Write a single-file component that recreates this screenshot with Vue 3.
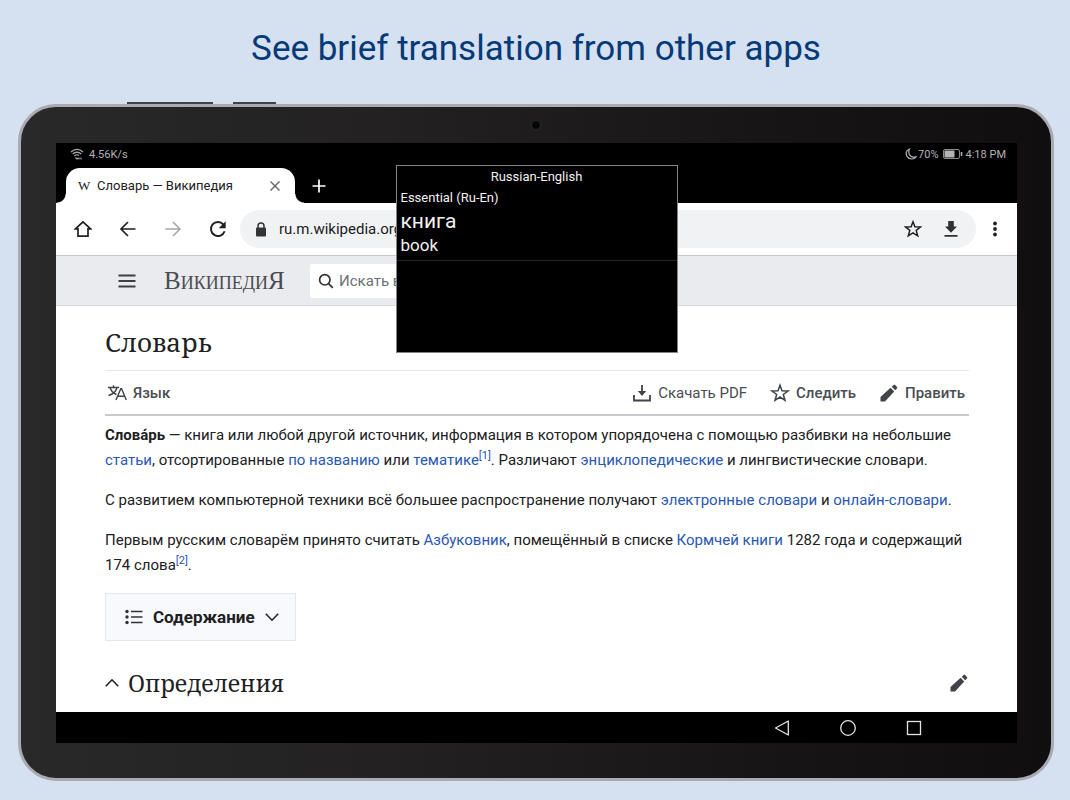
<script setup>
const articleUrl = 'ru.m.wikipedia.org'
</script>

<template>
  <main class="promo">
    <h1 class="headline">See brief translation from other apps</h1>

    <section class="tablet" aria-label="Tablet">
      <span class="side-key side-key-long"></span>
      <span class="side-key side-key-short"></span>
      <span class="camera"></span>

      <div class="screen">
        <div class="status">
          <svg class="wifi" viewBox="0 0 14 12" fill="none" stroke="currentColor" stroke-width="1.1">
            <path d="M1 4Q7-1.2 13 4M2.700 6Q7 2.300 11.300 6M4.400 8Q7 5.800 9 7.500" />
            <path d="M5.500 9.500L7 11L8 10M9 9.500V11.500M11 9.500V11.500" />
          </svg>
          <span class="speed">4.56K/s</span>
          <svg class="moon" viewBox="0 0 12 12" fill="none" stroke="currentColor" stroke-width="1.2">
            <path d="M4.500 1C1 2.200 .2 6 2.200 8.600C4.500 11.800 9 11.700 11 8.800C8 9.600 5.500 8.800 4.400 6.500C3.500 4.600 3.700 2.700 4.500 1Z" />
          </svg>
          <span>70%</span>
          <svg class="battery" viewBox="0 0 20 10" fill="none" stroke="currentColor">
            <rect x=".5" y=".5" width="16" height="9" rx="1.500" stroke="#8c8c8c" />
            <rect x="1.500" y="1.500" width="10" height="7" fill="currentColor" stroke="none" />
            <path d="M18.500 3V7" stroke-width="1.500" />
          </svg>
          <span>4:18 PM</span>
        </div>

        <div class="tabs">
          <div class="tab">
            <span class="favicon">W</span>
            <span class="tab-title">Словарь — Википедия</span>
            <button class="bare" aria-label="Close tab">
              <svg class="i12" viewBox="0 0 12 12" fill="none" stroke="#5f6368" stroke-width="1.4"><path d="M1.500 1.500L10.500 10.500M10.500 1.500L1.500 10.500" /></svg>
            </button>
          </div>
          <button class="bare new-tab" aria-label="New tab">
            <svg class="i14" viewBox="0 0 14 14" fill="none" stroke="#fff" stroke-width="1.700"><path d="M7 .5V13.500M.5 7H13.500" /></svg>
          </button>
        </div>

        <div class="toolbar">
          <button class="bare nav-btn" aria-label="Home">
            <svg class="i18" viewBox="0 0 18 18" fill="none" stroke="#202124" stroke-width="1.700"><path d="M9 1.800L1.500 8.800H4V16.200H14V8.800H16.500Z" /></svg>
          </button>
          <button class="bare nav-btn" aria-label="Back">
            <svg class="i18" viewBox="0 0 18 18" fill="none" stroke="#202124" stroke-width="1.700"><path d="M16.500 9H2.500M9 2L2 9L9 16" /></svg>
          </button>
          <button class="bare nav-btn" aria-label="Forward">
            <svg class="i18" viewBox="0 0 18 18" fill="none" stroke="#a5a6a8" stroke-width="1.600"><path d="M1.500 9H15.500M9 2L16 9L9 16" /></svg>
          </button>
          <button class="bare nav-btn" aria-label="Reload">
            <svg class="i18" viewBox="0 0 18 18"><path d="M14.400 4.600A7 7 0 1 0 15.600 11.200" fill="none" stroke="#202124" stroke-width="1.900" /><path d="M16.700 1.200V8.200H9.700Z" fill="#202124" /></svg>
          </button>
          <div class="omnibox">
            <svg class="lock" viewBox="0 0 12 15"><path d="M3 6V4A3 3 0 0 1 9 4V6" fill="none" stroke="#333438" stroke-width="1.500" /><rect x="1" y="5.500" width="10" height="9" rx="1" fill="#333438" /></svg>
            <input class="url" type="text" aria-label="Address" :value="articleUrl" />
            <button class="bare" aria-label="Bookmark">
              <svg class="i18" viewBox="0 0 18 18" fill="none" stroke="#202124" stroke-width="1.500"><path d="M9 1.800L10.900 6.800L16.500 7L12.200 10.400L13.700 15.800L9 12.800L4.300 15.800L5.800 10.400L1.500 7L7.100 6.800Z" /></svg>
            </button>
            <button class="bare" aria-label="Download page">
              <svg class="i18" viewBox="0 0 18 18" fill="#303134"><path d="M6.200 1H11.800V6.500H15L9 12.800L3 6.500H6.200ZM2.500 15H15.500V16.800H2.500Z" /></svg>
            </button>
          </div>
          <button class="bare more" aria-label="More">
            <svg class="i18" viewBox="0 0 18 18" fill="#202124"><circle cx="9" cy="3.500" r="1.900" /><circle cx="9" cy="9" r="1.900" /><circle cx="9" cy="14.500" r="1.900" /></svg>
          </button>
        </div>

        <header class="wiki-bar">
          <button class="bare" aria-label="Меню">
            <svg class="i18" viewBox="0 0 18 18" fill="none" stroke="#3c3f43" stroke-width="1.800"><path d="M.5 3.500H17.500M.5 9H17.500M.5 14.500H17.500" /></svg>
          </button>
          <a class="wordmark" href="#">ВикипедиЯ</a>
          <label class="search">
            <svg class="i16" viewBox="0 0 16 16" fill="none" stroke="#303236" stroke-width="1.700"><circle cx="6.800" cy="6.800" r="5.200" /><path d="M10.600 10.600L14.800 14.800" /></svg>
            <input type="search" aria-label="Поиск" placeholder="Искать в Википедии" />
          </label>
        </header>

        <article class="article">
          <h2 class="title">Словарь</h2>
          <div class="actions">
            <button class="bare action language">
              <svg class="i20" viewBox="0 0 20 20" fill="none" stroke="#404347" stroke-width="1.400"><path d="M1 4.500H12M6.500 2.300V4.500M3 4.500C4 8 7 10.500 9.500 11.500M10 4.500C9 8.500 5 11.500 1.500 12.500" /><path d="M9 17L13.800 5.800H14.600L19.300 17M10.600 13.200H17.700" /></svg>
              Язык
            </button>
            <button class="bare action light">
              <svg class="i20" viewBox="0 0 20 20" fill="none" stroke="#404347" stroke-width="1.800"><path d="M2 12V17.500H18V12M10 2V11" /><path d="M5.800 8H14.200L10 13Z" fill="#404347" stroke="none" /></svg>
              Скачать PDF
            </button>
            <button class="bare action">
              <svg class="i20" viewBox="0 0 20 20" fill="none" stroke="#404347" stroke-width="1.500"><path d="M10 2.300L12 7.800L18 8L13.300 11.500L15 17.300L10 14L5 17.300L6.700 11.500L2 8L8 7.800Z" /></svg>
              Следить
            </button>
            <button class="bare action">
              <svg class="i20" viewBox="0 0 20 20" fill="#404347"><path d="M1.500 18.500V14L11.600 4.800L15.200 8.400L6 18.500ZM12.700 3.800L14.700 1.900Q15.400 1.300 16.100 2L18 3.900Q18.700 4.600 18.100 5.300L16.200 7.300Z" /></svg>
              Править
            </button>
          </div>

          <p><b>Слова́рь</b> — книга или любой другой источник, информация в котором упорядочена с помощью разбивки на небольшие <a href="#">статьи</a>, отсортированные <a href="#">по названию</a> или <a href="#">тематике</a><sup><a href="#">[1]</a></sup>. Различают <a href="#">энциклопедические</a> и лингвистические словари.</p>
          <p>С развитием компьютерной техники всё большее распространение получают <a href="#">электронные словари</a> и <a href="#">онлайн-словари</a>.</p>
          <p>Первым русским словарём принято считать <a href="#">Азбуковник</a>, помещённый в списке <a href="#">Кормчей книги</a> 1282 года и содержащий 174 слова<sup><a href="#">[2]</a></sup>.</p>

          <button class="contents">
            <svg class="i18" viewBox="0 0 18 18"><g fill="#303236"><circle cx="2" cy="3.500" r="1.700" /><circle cx="2" cy="9" r="1.700" /><circle cx="2" cy="14.500" r="1.700" /></g><path d="M6 3.500H17.500M6 9H17.500M6 14.500H17.500" fill="none" stroke="#303236" stroke-width="1.500" /></svg>
            Содержание
            <svg class="i14" viewBox="0 0 14 14" fill="none" stroke="#202124" stroke-width="1.600"><path d="M.8 3.800L7 10.200L13.200 3.800" /></svg>
          </button>

          <div class="section">
            <svg class="i14" viewBox="0 0 14 14" fill="none" stroke="#202124" stroke-width="1.600"><path d="M.8 10.200L7 3.800L13.200 10.200" /></svg>
            <h3>Определения</h3>
            <button class="bare" aria-label="Править раздел">
              <svg class="i20" viewBox="0 0 20 20" fill="#404347"><path d="M1.500 18.500V14L11.600 4.800L15.200 8.400L6 18.500ZM12.700 3.800L14.700 1.900Q15.400 1.300 16.100 2L18 3.900Q18.700 4.600 18.100 5.300L16.200 7.300Z" /></svg>
            </button>
          </div>
        </article>

        <nav class="system-nav">
          <button class="bare" aria-label="Back"><svg class="i16" viewBox="0 0 16 16" fill="none" stroke="#e4e4e4" stroke-width="1.300"><path d="M14.300 1V15L1.500 8Z" stroke-linejoin="round" /></svg></button>
          <button class="bare" aria-label="Home"><svg class="i16" viewBox="0 0 16 16" fill="none" stroke="#e4e4e4" stroke-width="1.300"><circle cx="8" cy="8" r="7.300" /></svg></button>
          <button class="bare" aria-label="Recents"><svg class="i16" viewBox="0 0 16 16" fill="none" stroke="#e4e4e4" stroke-width="1.300"><rect x="1.500" y="1.500" width="13" height="13" /></svg></button>
        </nav>

        <aside class="popup">
          <div class="popup-title">Russian-English</div>
          <div class="entry">
            <div class="dictionary">Essential (Ru-En)</div>
            <div class="word">книга</div>
            <div class="meaning">book</div>
          </div>
        </aside>
      </div>
    </section>
  </main>
</template>

<style>
body {
  margin: 0;
  background: #d5e0f0;
}
</style>

<style scoped>
* {
  box-sizing: border-box;
}
.promo {
  min-height: 100vh;
  padding: 0 16px 19px 18px;
  background: #d5e0f0;
  font-family: Roboto, "Noto Sans", sans-serif;
  font-size: 15px;
  color: #202122;
}
.headline {
  margin: 0;
  padding: 24px 0 30px;
  font-size: 35px;
  line-height: 50px;
  font-weight: 400;
  text-align: center;
  color: #053a78;
}
.tablet {
  position: relative;
  padding: 36px 34px 35px 35px;
  border: 3px solid #a9abb1;
  border-radius: 38px;
  background: linear-gradient(90deg, #29292a, #232122 35%, #171415 75%, #110e0f);
}
.side-key {
  position: absolute;
  top: -5px;
  height: 2px;
  background: #3c4354;
}
.side-key-long {
  left: 106px;
  width: 86px;
}
.side-key-short {
  left: 212px;
  width: 43px;
}
.camera {
  position: absolute;
  top: 13px;
  left: 50%;
  width: 10px;
  height: 10px;
  margin-left: -5px;
  border: 1px solid #2b2b2e;
  border-radius: 50%;
  background: #050507;
}
.screen {
  position: relative;
  background: #fff;
}
.bare {
  display: flex;
  align-items: center;
  padding: 0;
  border: 0;
  background: none;
  font: inherit;
  color: inherit;
}
svg {
  display: block;
  flex: none;
}
.i12 { width: 12px; height: 12px; }
.i14 { width: 14px; height: 14px; }
.i16 { width: 16px; height: 16px; }
.i18 { width: 18px; height: 18px; }
.i20 { width: 20px; height: 20px; }

.status {
  display: flex;
  align-items: center;
  height: 22px;
  padding: 0 11px 0 14px;
  background: #000;
  font-size: 11px;
  color: #b4b4b4;
}
.wifi {
  width: 14px;
  height: 12px;
  margin-right: 5px;
}
.speed {
  margin-right: auto;
}
.moon {
  width: 12px;
  height: 12px;
  margin-right: 1px;
}
.battery {
  width: 20px;
  height: 10px;
  margin: 0 3px 0 4px;
}
.tabs {
  display: flex;
  align-items: center;
  height: 38px;
  padding: 3px 10px 0;
  background: #000;
}
.tab {
  position: relative;
  display: flex;
  align-items: center;
  width: 229px;
  height: 35px;
  padding: 0 14px 0 12px;
  border-radius: 14px 14px 0 0;
  background: #fff;
  font-size: 13px;
}
.tab::before,
.tab::after {
  content: "";
  position: absolute;
  bottom: 0;
  width: 9px;
  height: 9px;
}
.tab::before {
  right: 100%;
  background: radial-gradient(circle at 0 0, #000 8px, #fff 9px);
}
.tab::after {
  left: 100%;
  background: radial-gradient(circle at 100% 0, #000 8px, #fff 9px);
}
.favicon {
  width: 19px;
  font-family: "Liberation Serif", serif;
  font-size: 13px;
}
.tab-title {
  flex: 1;
  white-space: nowrap;
}
.new-tab {
  margin-left: 17px;
}
.toolbar {
  display: flex;
  align-items: center;
  height: 53px;
  padding: 0 4px;
  border-bottom: 1px solid #c6c7cb;
}
.nav-btn {
  justify-content: center;
  width: 45px;
}
.omnibox {
  display: flex;
  flex: 1;
  align-items: center;
  gap: 20px;
  height: 38px;
  padding: 0 16px 0 15px;
  border-radius: 19px;
  background: #f1f2f4;
}
.lock {
  width: 12px;
  height: 15px;
}
.url {
  flex: 1;
  min-width: 0;
  margin-left: -8px;
  padding: 0;
  border: 0;
  background: none;
  font: inherit;
  color: inherit;
}
.more {
  justify-content: center;
  width: 37px;
}
.wiki-bar {
  display: flex;
  align-items: center;
  height: 50px;
  padding-left: 62px;
  border-bottom: 1px solid #d9dadf;
  background: #eaebef;
}
.wordmark {
  width: 119px;
  margin: 0 27px 0 28px;
  font-family: "Liberation Serif", serif;
  font-size: 25px;
  font-variant: small-caps;
  white-space: nowrap;
  text-decoration: none;
  color: #4a4c52;
}
.search {
  display: flex;
  align-items: center;
  gap: 5px;
  width: 340px;
  height: 34px;
  padding: 0 8px;
  border-radius: 2px;
  background: #fff;
}
.search input {
  flex: 1;
  min-width: 0;
  padding: 0;
  border: 0;
  font: inherit;
}
.search input::placeholder {
  color: #6c6f73;
  opacity: 1;
}
.article {
  padding: 16px 48px 11px 49px;
}
.title,
.section h3 {
  margin: 0;
  font-family: "Noto Serif", "Liberation Serif", serif;
  font-weight: 400;
}
.title {
  height: 48px;
  font-size: 26px;
  line-height: 40px;
}
.actions {
  display: flex;
  align-items: center;
  gap: 23px;
  height: 46px;
  padding: 0 4px 0 2px;
  border-top: 1px solid #e6e7e9;
  border-bottom: 2px solid #c8cacd;
  margin-bottom: 7px;
}
.action {
  gap: 6px;
  font-weight: 500;
  color: #4a4d52;
}
.action.light {
  font-weight: 400;
}
.language {
  margin-right: auto;
}
p {
  margin: 0 0 15px;
  line-height: 25px;
}
p a {
  color: #2a57b4;
  text-decoration: none;
}
sup {
  font-size: 11px;
  line-height: 0;
}
.contents {
  display: flex;
  align-items: center;
  gap: 10px;
  height: 48px;
  padding: 0 16px 0 19px;
  border: 1px solid #e6e8ee;
  background: #f8f9fc;
  font: inherit;
  font-size: 17px;
  font-weight: 700;
  color: #202122;
}
.section {
  display: flex;
  align-items: center;
  gap: 9px;
  padding-top: 24px;
}
.section h3 {
  flex: 1;
  font-size: 23px;
  line-height: 36px;
}
.system-nav {
  display: flex;
  align-items: center;
  justify-content: flex-end;
  gap: 50px;
  height: 31px;
  padding-right: 95px;
  background: #000;
}
.popup {
  position: absolute;
  top: 22px;
  left: 50%;
  width: 282px;
  height: 188px;
  margin-left: -141px;
  border: 1px solid #858585;
  background: #000;
  color: #f0f0f0;
  font-size: 13px;
}
.popup-title {
  line-height: 21px;
  text-align: center;
}
.entry {
  padding: 0 4px 3px;
  border-bottom: 1px solid #262626;
}
.dictionary {
  line-height: 22px;
}
.word {
  font-size: 21px;
  line-height: 25px;
}
.meaning {
  font-size: 17px;
  line-height: 23px;
}
</style>
